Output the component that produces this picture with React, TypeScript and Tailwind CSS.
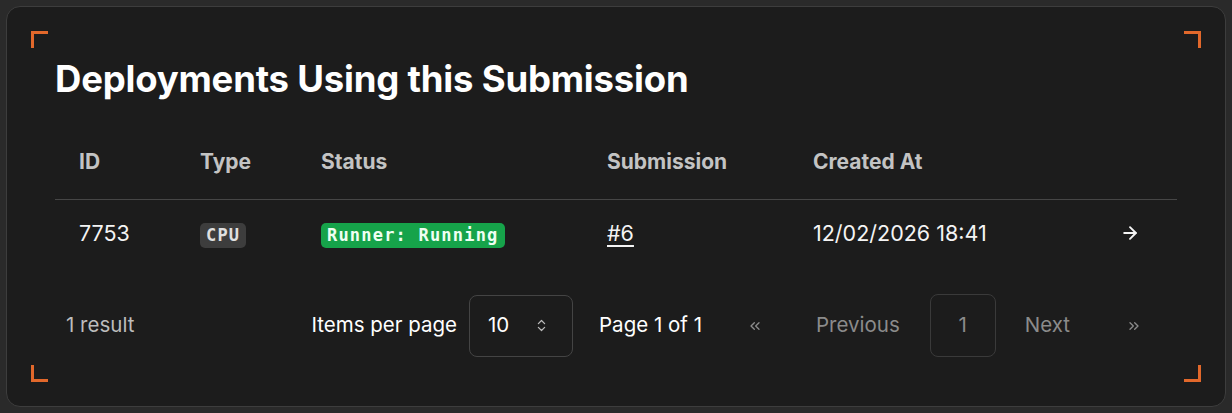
import { ArrowRight, ChevronsLeft, ChevronsRight, ChevronsUpDown } from "lucide-react";

const Corner = ({ pos }: { pos: string }) => (
    <span className={`absolute w-[17px] h-[17px] border-[#e2682b] ${pos}`}></span>
);

const deployments = [
    { id: "7753", type: "CPU", status: "Runner: Running", submission: "#6", createdAt: "12/02/2026 18:41" },
];

const App = () => {
    return (
        <div className="w-full h-[413px] bg-[#2a2a2a] p-[6px] font-['Inter',sans-serif]">
            <div className="relative h-[401px] rounded-[14px] border border-[#3d3d3d] bg-[#1c1c1c] px-12 pt-[50px]">
                <Corner pos="top-[24px] left-[24px] border-t-[3px] border-l-[3px]" />
                <Corner pos="top-[24px] right-[24px] border-t-[3px] border-r-[3px]" />
                <Corner pos="bottom-[24px] left-[24px] border-b-[3px] border-l-[3px]" />
                <Corner pos="bottom-[24px] right-[24px] border-b-[3px] border-r-[3px]" />

                <h2 className="text-[36.5px] leading-[44px] font-bold text-white tracking-[-0.2px]">Deployments Using this Submission</h2>

                <table className="w-full table-fixed mt-6 text-[21.5px]">
                    <colgroup>
                        <col className="w-[121px]" />
                        <col className="w-[121px]" />
                        <col className="w-[286px]" />
                        <col className="w-[206px]" />
                        <col />
                        <col className="w-[81px]" />
                    </colgroup>
                    <thead>
                        <tr className="border-b border-[#464646] text-left text-[#c3c3c3] text-[21px]">
                            <th className="h-[74px] px-6 font-bold">ID</th>
                            <th className="h-[74px] px-6 font-bold">Type</th>
                            <th className="h-[74px] px-6 font-bold">Status</th>
                            <th className="h-[74px] px-6 font-bold">Submission</th>
                            <th className="h-[74px] px-6 font-bold">Created At</th>
                            <th className="h-[74px] px-6"></th>
                        </tr>
                    </thead>
                    <tbody>
                        {deployments.map(d => (
                            <tr key={d.id} className="text-[#f4f4f4]">
                                <td className="h-[68px] px-6">{d.id}</td>
                                <td className="h-[68px] px-6">
                                    <span className="inline-block rounded-[5px] bg-[#3d3d3d] px-[6px] leading-[25px] text-[17px] font-bold tracking-[1.2px] text-[#e0e0e0] font-['DejaVu_Sans_Mono',monospace]">{d.type}</span>
                                </td>
                                <td className="h-[68px] px-6">
                                    <span className="inline-block whitespace-nowrap rounded-[5px] bg-[#16a34a] px-[6px] leading-[25px] text-[17px] font-bold tracking-[1.2px] text-[#effff2] font-['DejaVu_Sans_Mono',monospace]">{d.status}</span>
                                </td>
                                <td className="h-[68px] px-6">
                                    <a href="#" className="underline underline-offset-4">{d.submission}</a>
                                </td>
                                <td className="h-[68px] px-6 whitespace-nowrap">{d.createdAt}</td>
                                <td className="h-[68px] px-6">
                                    <ArrowRight size={20} strokeWidth={2.25} />
                                </td>
                            </tr>
                        ))}
                    </tbody>
                </table>

                <div className="mt-[27px] flex items-center justify-between pl-[11px] pr-3 text-[20.5px]">
                    <p className="text-[#bdbdbd]">1 result</p>
                    <div className="flex items-center">
                        <span className="text-white">Items per page</span>
                        <button className="ml-3 flex h-[62px] w-[104px] items-center justify-between rounded-lg border border-[#444] pl-[18px] pr-[23px] text-white">
                            10
                            <ChevronsUpDown size={15} strokeWidth={2} className="text-[#bbbbbb]" />
                        </button>
                        <span className="ml-[26px] text-white">Page 1 of 1</span>
                        <div className="ml-[22px] flex items-center gap-2 text-[#8b8b8b]">
                            <button className="flex h-[62px] w-[62px] items-center justify-center">
                                <ChevronsLeft size={16} strokeWidth={2} />
                            </button>
                            <button className="h-[62px] px-[22px]">Previous</button>
                            <button className="h-[63px] w-[66px] rounded-lg border border-[#3a3a3a]">1</button>
                            <button className="h-[62px] pl-[21px] pr-[25px]">Next</button>
                            <button className="flex h-[62px] w-[62px] items-center justify-center">
                                <ChevronsRight size={16} strokeWidth={2} />
                            </button>
                        </div>
                    </div>
                </div>
            </div>
        </div>
    );
};

export default App;
